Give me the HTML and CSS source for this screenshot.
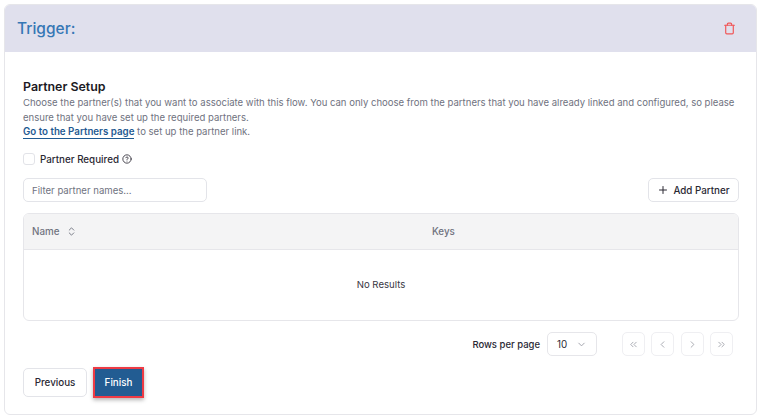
FILE: index.html
```html
<!DOCTYPE html>
<html lang="en">
<head>
<meta charset="utf-8">
<title>Trigger</title>
<link rel="stylesheet" href="styles.css">
</head>
<body>
<section class="card">
  <header class="card-head">
    <h1 class="title">Trigger:</h1>
    <svg class="trash" viewBox="0 0 24 24" width="13" height="13" fill="none" stroke="currentColor" stroke-width="2.2" stroke-linecap="round" stroke-linejoin="round"><path d="M3 6h18"/><path d="M19 6v14a2 2 0 0 1-2 2H7a2 2 0 0 1-2-2V6"/><path d="M8 6V4a2 2 0 0 1 2-2h4a2 2 0 0 1 2 2v2"/></svg>
  </header>
  <div class="card-body">
    <h2 class="section-title">Partner Setup</h2>
    <p class="desc">Choose the partner(s) that you want to associate with this flow. You can only choose from the partners that you have already linked and configured, so please ensure that you have set up the required partners.<br><a class="link" href="#">Go to the Partners page</a> to set up the partner link.</p>
    <label class="check-row">
      <span class="checkbox"></span>
      <span class="check-label">Partner Required</span>
      <svg viewBox="0 0 24 24" width="10" height="10" fill="none" stroke="currentColor" stroke-width="2" stroke-linecap="round" stroke-linejoin="round"><circle cx="12" cy="12" r="10"/><path d="M9.1 9a3 3 0 0 1 5.8 1c0 2-3 3-3 3"/><path d="M12 17h.01"/></svg>
    </label>
    <div class="toolbar">
      <div class="input">Filter partner names...</div>
      <button class="btn add" type="button">
        <svg viewBox="0 0 24 24" width="12" height="12" fill="none" stroke="currentColor" stroke-width="2" stroke-linecap="round"><path d="M5 12h14"/><path d="M12 5v14"/></svg>
        Add Partner
      </button>
    </div>
    <div class="table">
      <div class="thead">
        <div class="th th-name">Name
          <svg viewBox="0 0 24 24" width="11" height="11" fill="none" stroke="currentColor" stroke-width="2" stroke-linecap="round" stroke-linejoin="round"><path d="m7 15 5 5 5-5"/><path d="m7 9 5-5 5 5"/></svg>
        </div>
        <div class="th">Keys</div>
      </div>
      <div class="empty">No Results</div>
    </div>
    <div class="pager">
      <span class="rows-label">Rows per page</span>
      <div class="select"><span>10</span>
        <svg viewBox="0 0 24 24" width="11" height="11" fill="none" stroke="currentColor" stroke-width="2" stroke-linecap="round" stroke-linejoin="round"><path d="m6 9 6 6 6-6"/></svg>
      </div>
      <div class="pages">
        <span class="page-btn"><svg viewBox="0 0 24 24" width="11" height="11" fill="none" stroke="currentColor" stroke-width="2" stroke-linecap="round" stroke-linejoin="round"><path d="m11 17-5-5 5-5"/><path d="m18 17-5-5 5-5"/></svg></span>
        <span class="page-btn"><svg viewBox="0 0 24 24" width="11" height="11" fill="none" stroke="currentColor" stroke-width="2" stroke-linecap="round" stroke-linejoin="round"><path d="m15 18-6-6 6-6"/></svg></span>
        <span class="page-btn"><svg viewBox="0 0 24 24" width="11" height="11" fill="none" stroke="currentColor" stroke-width="2" stroke-linecap="round" stroke-linejoin="round"><path d="m9 18 6-6-6-6"/></svg></span>
        <span class="page-btn"><svg viewBox="0 0 24 24" width="11" height="11" fill="none" stroke="currentColor" stroke-width="2" stroke-linecap="round" stroke-linejoin="round"><path d="m6 17 5-5-5-5"/><path d="m13 17 5-5-5-5"/></svg></span>
      </div>
    </div>
    <div class="actions">
      <button class="btn prev" type="button">Previous</button>
      <button class="btn finish" type="button">Finish</button>
    </div>
  </div>
</section>
</body>
</html>
```
FILE: styles.css
```css
* { box-sizing: border-box; }
html, body { height: 100%; }
body {
  margin: 0;
  padding: 4px;
  background: #fff;
  font-family: Inter, "Noto Sans", sans-serif;
  color: #1c1a24;
  overflow: hidden;
}
.card {
  height: 411px;
  border: 1px solid #e6e6ea;
  border-radius: 6px;
  overflow: hidden;
  background: #fff;
}
.card-head {
  height: 47px;
  background: #e0e0ed;
  display: flex;
  align-items: center;
  justify-content: space-between;
  padding: 0 20px 0 12px;
}
.title {
  margin: 0;
  font-size: 15.5px;
  font-weight: 500;
  color: #3577b5;
}
.trash { color: #f0585a; }
.card-body { padding: 26px 17px 0 18px; }
.section-title {
  margin: 0;
  font-size: 12.4px;
  line-height: 17px;
  font-weight: 600;
  color: #1c1a24;
}
.desc {
  margin: 1px 0 0;
  font-size: 9.55px;
  line-height: 14.7px;
  color: #6f7280;
}
.link {
  color: #1f5a92;
  font-size: 9.75px;
  font-weight: 600;
  text-decoration: none;
  border-bottom: 1px solid #1f5a92;
  padding-bottom: 1px;
}
.check-row {
  display: flex;
  align-items: center;
  margin-top: 12px;
  height: 14px;
  font-size: 9.8px;
  font-weight: 500;
  color: #2a2833;
}
.check-row svg { margin-left: 3px; }
.checkbox {
  width: 12px;
  height: 12px;
  border: 1px solid #e2e3e8;
  border-radius: 3px;
  margin-right: 5px;
}
.toolbar {
  display: flex;
  justify-content: space-between;
  align-items: center;
  margin-top: 12px;
}
.input {
  width: 184px;
  height: 24px;
  border: 1px solid #e3e4e9;
  border-radius: 5px;
  padding: 0 8px;
  display: flex;
  align-items: center;
  font-size: 9.6px;
  color: #70737f;
}
.btn {
  font-family: inherit;
  font-size: 9.8px;
  font-weight: 500;
  border: 1px solid #e3e4e9;
  border-radius: 5px;
  background: #fff;
  color: #2a2833;
  padding: 0;
  display: inline-flex;
  align-items: center;
  justify-content: center;
}
.add { width: 91px; height: 24px; gap: 4px; }
.table {
  margin-top: 11px;
  border: 1px solid #e6e6ea;
  border-radius: 6px;
  overflow: hidden;
}
.thead {
  display: grid;
  grid-template-columns: 400px 1fr;
  height: 36px;
  background: #f4f4f5;
  border-bottom: 1px solid #e6e6ea;
}
.th {
  display: flex;
  align-items: center;
  gap: 7px;
  padding-left: 8px;
  font-size: 9.8px;
  font-weight: 500;
  color: #70737f;
}
.empty {
  height: 69.5px;
  display: flex;
  align-items: center;
  justify-content: center;
  font-size: 9.6px;
  color: #3a3844;
}
.pager {
  display: flex;
  align-items: center;
  justify-content: flex-end;
  margin-top: 11.5px;
  padding-right: 6px;
}
.rows-label { font-size: 9.5px; font-weight: 500; color: #2a2833; }
.select {
  width: 50px;
  height: 24px;
  margin-left: 7px;
  border: 1px solid #e6e6ea;
  border-radius: 5px;
  display: flex;
  align-items: center;
  justify-content: space-between;
  padding: 0 9px;
  font-size: 9.8px;
  color: #2a2833;
}
.select svg { color: #9b9da6; }
.pages { display: flex; gap: 6.33px; margin-left: 25px; }
.page-btn {
  width: 23px;
  height: 24px;
  border: 1px solid #efeff2;
  border-radius: 5px;
  display: flex;
  align-items: center;
  justify-content: center;
  color: #a3a5ad;
}
.actions { display: flex; gap: 8px; margin-top: 12px; }
.prev { width: 64px; height: 29px; }
.finish {
  width: 47px;
  height: 27px;
  margin-top: 1px;
  background: #225c92;
  color: #fff;
  border: 0;
  border-radius: 0;
  outline: 2px solid #ee3b45;
  box-shadow: 0 2px 4px 2px rgba(0,0,0,.3);
}
```
